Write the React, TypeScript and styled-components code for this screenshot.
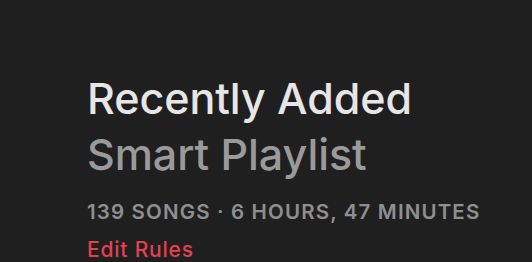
import React from "react";
import styled, { createGlobalStyle } from "styled-components";

const Global = createGlobalStyle`
  html, body { margin: 0; padding: 0; background: #1f1f1f; }
  body { font-family: Inter, "Liberation Sans", sans-serif; -webkit-font-smoothing: antialiased; }
`;

const Page = styled.div`
  width: 532px;
  height: 262px;
  background: #1f1f1f;
  padding: 70px 0 0 87px;
  box-sizing: border-box;
  overflow: hidden;
  display: flex;
  flex-direction: column;
  align-items: flex-start;
`;

const Title = styled.h1<{ $muted?: boolean }>`
  margin: 0;
  font-size: 43px;
  font-weight: 500;
  line-height: 56px;
  letter-spacing: -0.05px;
  color: ${(p) => (p.$muted ? "#9a9a9a" : "#e6e6e6")};
`;

const Meta = styled.div`
  margin-top: 18px;
  font-size: 20.5px;
  font-weight: 600;
  line-height: 24px;
  color: #8f8f8f;
  letter-spacing: 1.15px;
`;

const EditLink = styled.a`
  margin-top: 14px;
  font-size: 21px;
  font-weight: 500;
  line-height: 24px;
  color: #e5404f;
  letter-spacing: 0.8px;
  cursor: pointer;
`;

export default function App() {
  return (
    <>
      <Global />
      <Page>
        <Title>Recently Added</Title>
        <Title $muted>Smart Playlist</Title>
        <Meta>139 SONGS · 6 HOURS, 47 MINUTES</Meta>
        <EditLink>Edit Rules</EditLink>
      </Page>
    </>
  );
}
